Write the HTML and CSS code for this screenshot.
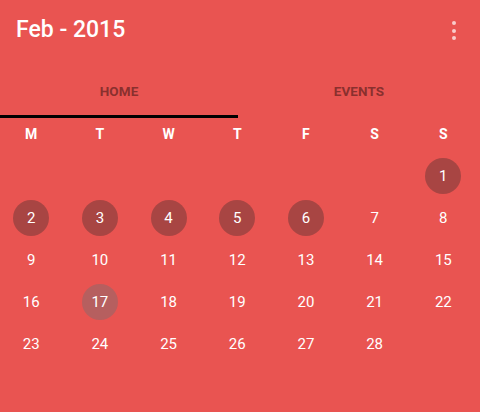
FILE: index.html
```html
<!DOCTYPE html>
<html>
<head>
<meta charset="utf-8">
<link rel="stylesheet" href="styles.css">
</head>
<body>
<div class="app">
  <header class="toolbar">
    <h1 class="title">Feb - 2015</h1>
    <div class="menu" aria-label="More options">
      <span class="dot"></span><span class="dot"></span><span class="dot"></span>
    </div>
  </header>
  <nav class="tabs">
    <div class="tab active"><span>HOME</span></div>
    <div class="tab"><span>EVENTS</span></div>
  </nav>
  <div class="weekdays">
    <span>M</span><span>T</span><span>W</span><span>T</span><span>F</span><span>S</span><span>S</span>
  </div>
  <div class="days">
    <span class="day blank"></span><span class="day blank"></span><span class="day blank"></span><span class="day blank"></span><span class="day blank"></span><span class="day blank"></span>
    <span class="day"><span class="num mark">1</span></span>
    <span class="day"><span class="num mark">2</span></span>
    <span class="day"><span class="num mark">3</span></span>
    <span class="day"><span class="num mark">4</span></span>
    <span class="day"><span class="num mark">5</span></span>
    <span class="day"><span class="num mark">6</span></span>
    <span class="day"><span class="num">7</span></span>
    <span class="day"><span class="num">8</span></span>
    <span class="day"><span class="num">9</span></span>
    <span class="day"><span class="num">10</span></span>
    <span class="day"><span class="num">11</span></span>
    <span class="day"><span class="num">12</span></span>
    <span class="day"><span class="num">13</span></span>
    <span class="day"><span class="num">14</span></span>
    <span class="day"><span class="num">15</span></span>
    <span class="day"><span class="num">16</span></span>
    <span class="day"><span class="num today">17</span></span>
    <span class="day"><span class="num">18</span></span>
    <span class="day"><span class="num">19</span></span>
    <span class="day"><span class="num">20</span></span>
    <span class="day"><span class="num">21</span></span>
    <span class="day"><span class="num">22</span></span>
    <span class="day"><span class="num">23</span></span>
    <span class="day"><span class="num">24</span></span>
    <span class="day"><span class="num">25</span></span>
    <span class="day"><span class="num">26</span></span>
    <span class="day"><span class="num">27</span></span>
    <span class="day"><span class="num">28</span></span>
  </div>
</div>
</body>
</html>
```
FILE: styles.css
```css
html, body {
  margin: 0;
  padding: 0;
  background: #e95451;
}
body {
  width: 480px;
  height: 412px;
  overflow: hidden;
  font-family: Roboto, "Noto Sans", sans-serif;
  color: #ffffff;
}
.toolbar {
  height: 60px;
  display: flex;
  align-items: center;
  padding: 0 24px 0 16px;
}
.title {
  margin: 0;
  font-size: 23px;
  font-weight: 500;
  line-height: 26px;
  color: #ffffff;
}
.menu {
  margin-left: auto;
  display: flex;
  flex-direction: column;
  gap: 3.5px;
  padding-top: 1px;
}
.dot {
  width: 4px;
  height: 4px;
  border-radius: 50%;
  background: rgba(255, 255, 255, 0.7);
}
.tabs {
  display: flex;
  height: 58px;
}
.tab {
  flex: 0 0 238px;
  display: flex;
  align-items: center;
  justify-content: center;
  padding-top: 6px;
  box-sizing: border-box;
  border-bottom: 3px solid transparent;
  font-size: 13.5px;
  font-weight: 700;
  letter-spacing: 0.1px;
  color: #8a302e;
}
.tab + .tab {
  flex: 1 1 auto;
}
.tab.active {
  border-bottom-color: #000000;
}
.weekdays, .days {
  display: grid;
  grid-template-columns: repeat(7, 62.4px);
  column-gap: 6.3px;
}
.weekdays {
  height: 31px;
  align-items: center;
  font-size: 14px;
  font-weight: 700;
  text-align: center;
}
.days {
  margin-top: 6px;
  grid-auto-rows: 42px;
}
.day {
  display: flex;
  align-items: center;
  justify-content: center;
}
.num {
  width: 36px;
  height: 36px;
  border-radius: 50%;
  display: flex;
  align-items: center;
  justify-content: center;
  font-size: 15px;
  font-weight: 400;
}
.num.mark {
  background: #a84543;
}
.num.today {
  background: #b65f5f;
}
```
